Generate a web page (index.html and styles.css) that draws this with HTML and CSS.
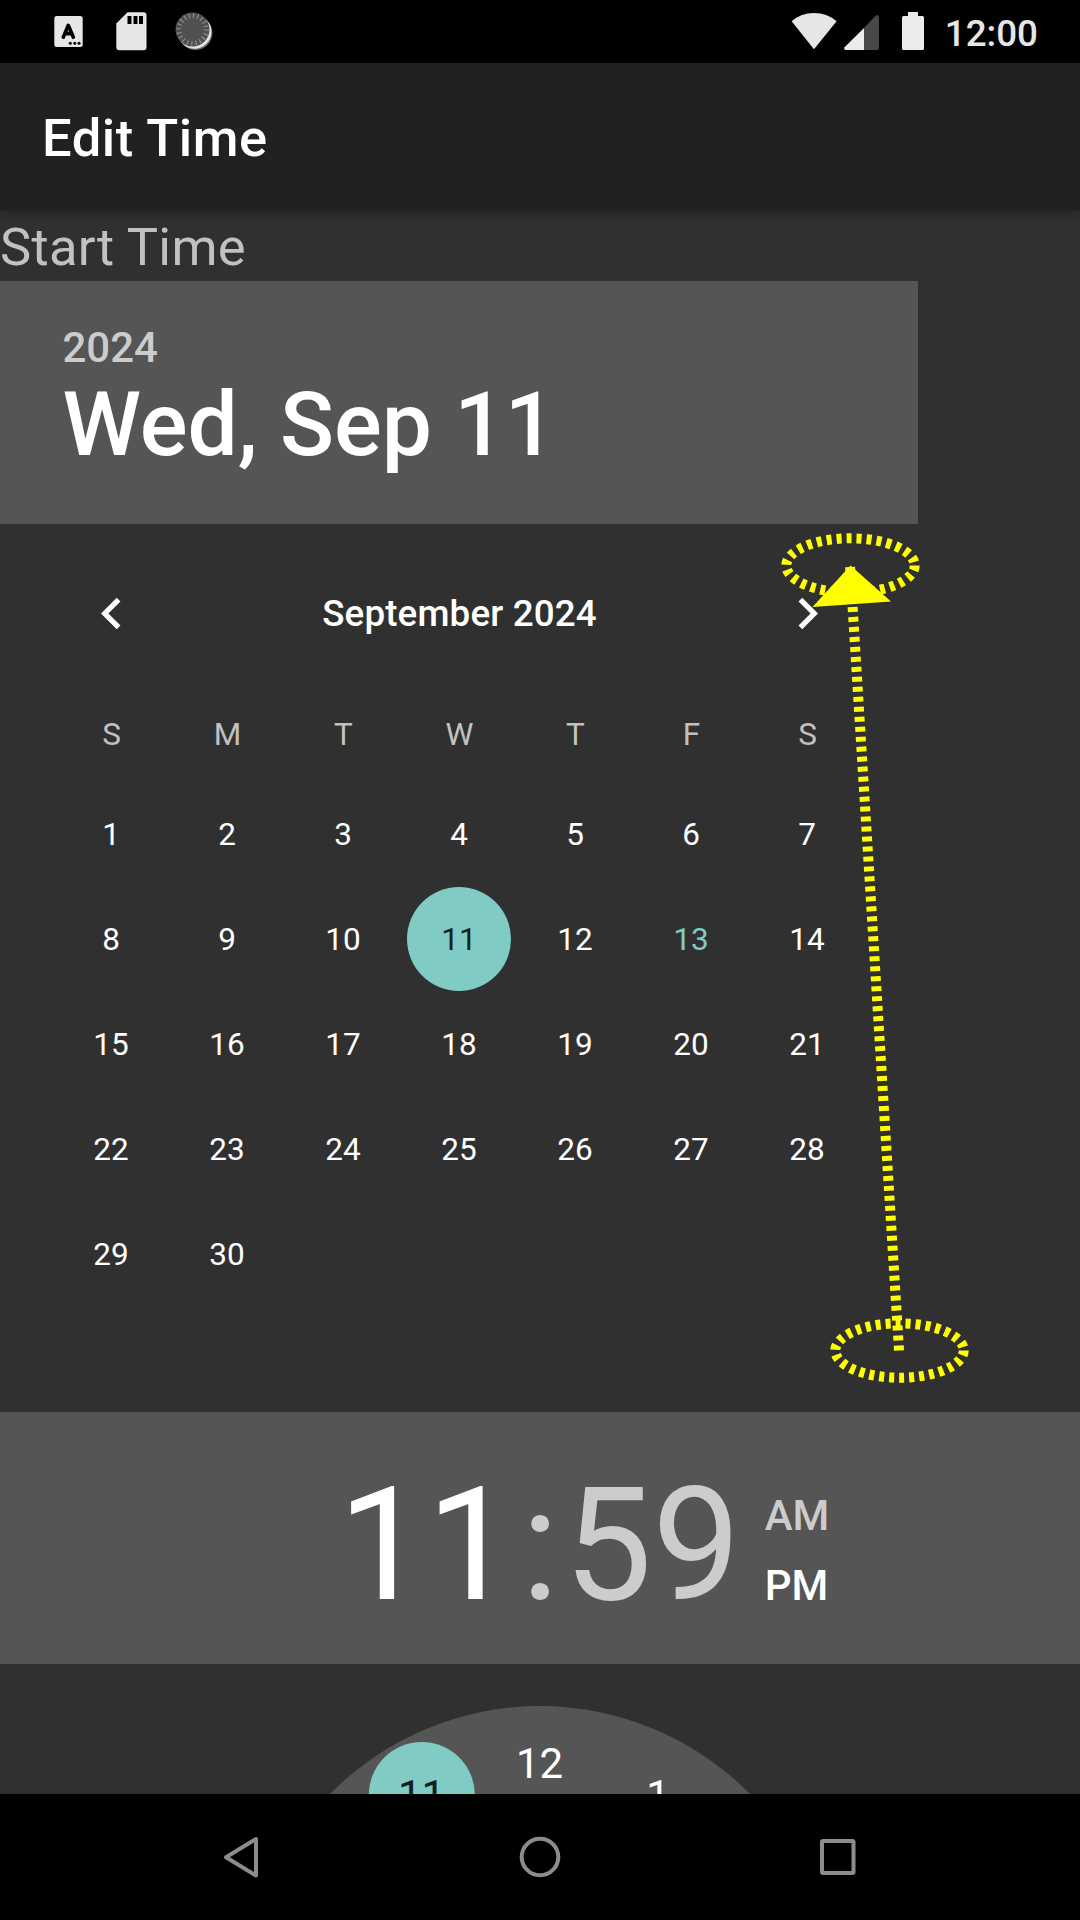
FILE: index.html
```html
<!DOCTYPE html>
<html lang="en">
<head>
<meta charset="utf-8">
<title>Edit Time</title>
<link rel="stylesheet" href="styles.css">
</head>
<body>
<div class="screen">
  <header class="status">
    <svg width="220" height="63" viewBox="0 0 220 63">
      <rect x="54.300" y="16" width="28.400" height="31" rx="2.500" fill="#e6e6e6"/>
      <path d="M63.300 37.200 68.300 25.300 73.300 37.200M65.300 33.600H71.300" fill="none" stroke="#000" stroke-width="3.600" stroke-linecap="round" stroke-linejoin="round"/>
      <g fill="#000"><circle cx="70.300" cy="43.300" r="1.500"/><circle cx="74.800" cy="43.300" r="1.500"/><circle cx="79" cy="43.300" r="1.500"/></g>
      <path d="M127.500 12.300H143.500a3 3 0 0 1 3 3V47.300a3 3 0 0 1-3 3H119.300a3 3 0 0 1-3-3V23.500z" fill="#e6e6e6"/>
      <path d="M127.500 16h4v8h-4zM133.500 16h4v8h-4zM139 16h4v8h-4z" fill="#000"/>
      <circle cx="195.500" cy="33" r="17" fill="#666"/>
      <circle cx="194.500" cy="31.800" r="17" fill="#e2e2e2"/>
      <circle cx="192.500" cy="29.500" r="17" fill="#505050"/>
      <circle cx="192.500" cy="29.500" r="13.800" fill="none" stroke="#909090" stroke-width="5" stroke-dasharray="1.100 3.235"/>
    </svg>
    <div class="status-right">
      <svg width="140" height="63" viewBox="785 0 140 63">
        <path d="M814 49.200 791.600 21.300Q801 13 814 13t22.600 8.300z" fill="#e6e6e6"/>
        <path d="M879 17.500V48q0 2-2 2H864V28L875.500 15.800Q878.500 13.500 879 17.500z" fill="#484848"/>
        <path d="M864 28V50H845.500Q843.500 49.500 844.300 47.500z" fill="#ececec"/>
        <path d="M908 12h10v4h4.500a1.500 1.500 0 0 1 1.500 1.500v31a1.500 1.500 0 0 1-1.500 1.500h-19a1.500 1.500 0 0 1-1.500-1.500v-31a1.500 1.500 0 0 1 1.500-1.500H908z" fill="#ececec"/>
      </svg>
      <span class="clock">12:00</span>
    </div>
  </header>
  <div class="appbar"><h1>Edit Time</h1></div>
  <main class="content">
    <div class="label">Start Time</div>
    <section class="date-picker">
      <div class="date-header">
        <div class="year">2024</div>
        <div class="date">Wed, Sep 11</div>
      </div>
      <div class="month-bar">
        <svg width="63" height="63" viewBox="0 0 24 24"><path d="M15.410 7.410 14 6l-6 6 6 6 1.410-1.410L10.830 12z" fill="#fff"/></svg>
        <span>September 2024</span>
        <svg width="63" height="63" viewBox="0 0 24 24"><path d="M8.590 16.590 10 18l6-6-6-6-1.410 1.410L13.170 12z" fill="#fff"/></svg>
      </div>
      <div class="weekdays"><span>S</span><span>M</span><span>T</span><span>W</span><span>T</span><span>F</span><span>S</span></div>
      <div class="days">
        <span>1</span><span>2</span><span>3</span><span>4</span><span>5</span><span>6</span><span>7</span>
        <span>8</span><span>9</span><span>10</span><span class="selected">11</span><span>12</span><span class="today">13</span><span>14</span>
        <span>15</span><span>16</span><span>17</span><span>18</span><span>19</span><span>20</span><span>21</span>
        <span>22</span><span>23</span><span>24</span><span>25</span><span>26</span><span>27</span><span>28</span>
        <span>29</span><span>30</span>
      </div>
    </section>
    <section class="time-header">
      <div class="time"><span class="hour">11</span><span class="colon">:</span><span>59</span></div>
      <div class="ampm"><span>AM</span><span class="on">PM</span></div>
    </section>
    <section class="dial">
      <svg width="1080" height="130" viewBox="0 1664 1080 130">
        <circle cx="540" cy="2000.500" r="294.500" fill="#555"/>
        <circle cx="421.800" cy="1795" r="53" fill="#80cbc4"/>
        <g class="dial-num" fill="#fff"><text x="539.500" y="1778">12</text><text x="658" y="1810">1</text><text x="421.500" y="1810" fill="#131e1d">11</text></g>
      </svg>
    </section>
  </main>
  <nav class="navbar">
    <svg width="1080" height="126" viewBox="0 1794 1080 126" fill="none" stroke="#8c8c8c" stroke-width="4" stroke-linejoin="round">
      <path d="M256 1839V1875.500L226 1857.200z"/>
      <circle cx="540" cy="1857" r="18.300"/>
      <rect x="822" y="1841" width="31.500" height="32" rx="1"/>
    </svg>
  </nav>
  <svg class="gesture" width="1080" height="1920" viewBox="0 0 1080 1920" fill="none" stroke="#ff0" stroke-width="10">
    <ellipse cx="850.500" cy="565.500" rx="64.200" ry="27.200" stroke-dasharray="5 5"/>
    <ellipse cx="899.500" cy="1350.500" rx="64.200" ry="27.200" stroke-dasharray="5 5"/>
    <path d="M899 1350.500 850 565.500" stroke-dasharray="5 5"/>
    <path d="M850.500 565.500 891 601.500 812.500 607z" fill="#ff0" stroke="none"/>
  </svg>
</div>
</body>
</html>
```
FILE: styles.css
```css
* { box-sizing: border-box; margin: 0; }
body { background: #000; font-family: Roboto, sans-serif; color: #fff; }
.screen { position: relative; width: 1080px; height: 1920px; overflow: hidden; display: flex; flex-direction: column; background: #303030; }
svg { display: block; }
.status { height: 63px; background: #000; display: flex; justify-content: space-between; }
.status-right { display: flex; padding-right: 42px; gap: 20px; }
.clock { font-size: 36.75px; font-weight: 500; line-height: 67px; color: #e6e6e6; }
.appbar { height: 147px; background: #212121; display: flex; align-items: center; padding-left: 42px; box-shadow: 0 3px 9px rgba(0, 0, 0, .28); z-index: 1; }
.appbar h1 { font-size: 52.5px; font-weight: 500; line-height: 62px; padding-top: 2px; letter-spacing: .55px; }
.content { flex: 1; display: flex; flex-direction: column; }
.label { height: 71px; font-size: 52.5px; line-height: 75px; letter-spacing: .27px; color: #c1c1c1; }
.date-picker { width: 918px; height: 1131px; }
.date-header { height: 243px; background: #555; padding: 42px 62.5px 0; font-weight: 500; }
.year { font-size: 42px; line-height: 50px; color: #ccc; }
.date { font-size: 89.25px; line-height: 104px; }
.month-bar { height: 179px; padding: 0 79px 0 80px; display: flex; justify-content: space-between; align-items: center; font-size: 36.75px; font-weight: 500; letter-spacing: .15px; }
.weekdays, .days { display: grid; grid-template-columns: repeat(7, 1fr); padding: 0 53px; font-size: 31.5px; text-align: center; }
.weekdays { height: 79px; line-height: 64px; padding: 0 52.5px 0 53.5px; color: #c1c1c1; }
.days { grid-auto-rows: 105px; line-height: 105px; justify-items: center; }
.days .selected { width: 104px; height: 104px; border-radius: 50%; background: #80cbc4; color: #131e1d; }
.days .today { color: #80cbc4; }
.time-header { height: 252px; background: #555; display: flex; padding-left: 338px; color: #ccc; }
.time { font-size: 157.5px; line-height: 266px; display: flex; }
.colon { margin: 0 4.5px 0 6px; }
.hour, .ampm .on { color: #fff; }
.ampm { display: flex; flex-direction: column; padding: 69px 0 0 24px; font-size: 42px; line-height: 70px; font-weight: 500; }
.dial { height: 130px; overflow: hidden; }
.dial-num { font-size: 42px; text-anchor: middle; }
.navbar { height: 126px; background: #000; }
.gesture { position: absolute; left: 0; top: 0; }
```
